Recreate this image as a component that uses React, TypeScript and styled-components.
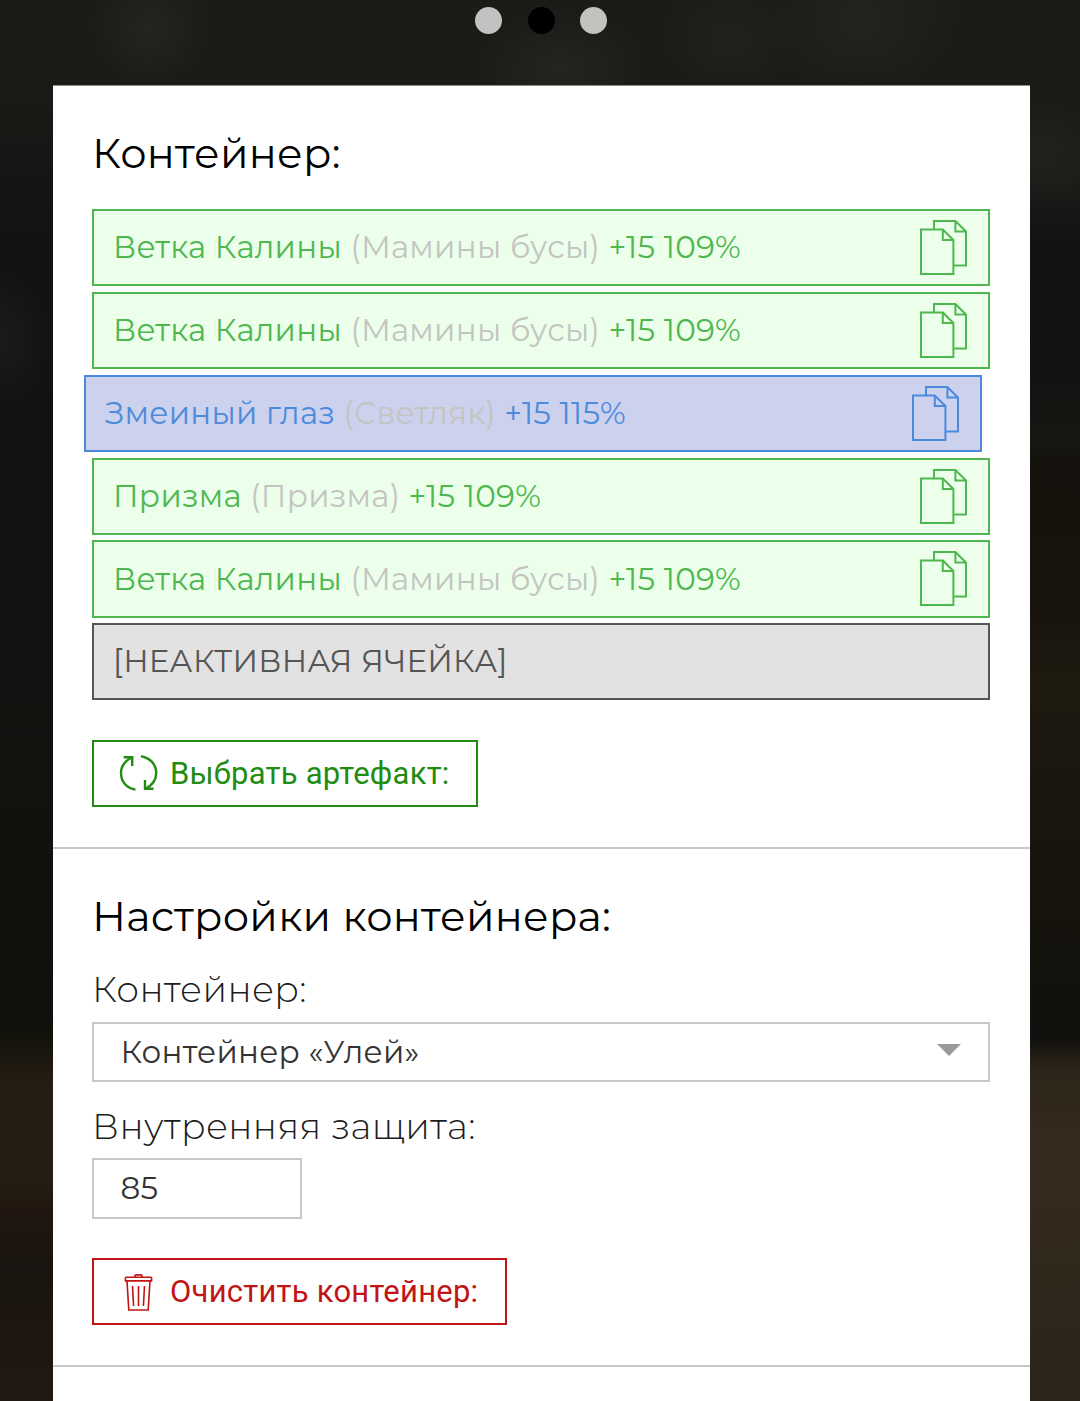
import React from "react";
import styled, { createGlobalStyle } from "styled-components";

const GlobalStyle = createGlobalStyle`
  *, *::before, *::after { box-sizing: border-box; }
  body {
    margin: 0;
    overflow: hidden;
    font-family: Montserrat, Inter, "Open Sans", sans-serif;
    font-weight: 400;
    letter-spacing: 0.27px;
    background: #11110e;
  }
`;

const Page = styled.main`
  height: 1401px;
  padding: 6.5px 50px 0 53px;
  display: flex;
  flex-direction: column;
  overflow: hidden;
  background:
    radial-gradient(ellipse 60px 60px at 150px 30px, #232520 0%, transparent 100%),
    radial-gradient(ellipse 90px 60px at 560px 70px, #242520 0%, transparent 100%),
    radial-gradient(ellipse 70px 60px at 730px 40px, #21221e 0%, transparent 100%),
    radial-gradient(ellipse 100px 80px at 860px 20px, #22241f 0%, transparent 100%),
    radial-gradient(ellipse 60px 50px at 1040px 150px, #20221d 0%, transparent 100%),
    radial-gradient(ellipse 50px 70px at 0px 340px, #1a1c1a 0%, transparent 100%),
    linear-gradient(180deg, #1b1c18 0, #1a1b17 90px, #1b1d19 180px, #121312 240px, #111210 350px, #161713 440px, #15110c 470px, #17130d 600px, #1f1a10 680px, #19160f 800px, #16130d 920px, #11110d 1000px, #12110f 1040px, #2d2519 1070px, #352b1e 1150px, #31281c 1260px, #2b241a 1401px) right top / 54px 100% no-repeat,
    linear-gradient(180deg, #1b1c18 0, #1a1b17 90px, #121312 230px, #111311 450px, #111310 700px, #0f100b 1020px, #14130c 1040px, #251d13 1085px, #251d13 1180px, #20160f 1210px, #19140f 1270px, #211814 1401px);
`;

const Dots = styled.nav`
  display: flex;
  justify-content: center;
  gap: 25.6px;
  height: 78.5px;
  padding-right: 1px;
`;

const Dot = styled.span<{ $current?: boolean }>`
  width: 27px;
  height: 27px;
  border-radius: 50%;
  background: ${(p) => (p.$current ? "#000" : "#c3c2c0")};
`;

const Card = styled.div`
  flex: 1;
  background: #fff;
  border-top: 1px solid #8f8b8a;
`;

const Section = styled.section<{ $height: number }>`
  height: ${(p) => p.$height}px;
  padding: 42px 40px 0 39px;
  border-bottom: 2px solid #c8c8c8;
`;

const Title = styled.h2`
  margin: 0;
  height: 50px;
  line-height: 50px;
  font-size: 41.5px;
  font-weight: 400;
  white-space: nowrap;
  color: #000;
`;

const Slots = styled.ul`
  list-style: none;
  margin: 31.2px 0 0;
  padding: 0;
  display: flex;
  flex-direction: column;
  gap: 5.6px;
`;

type Tone = "green" | "blue" | "gray";

const tones: Record<Tone, { line: string; fill: string }> = {
  green: { line: "#4fb750", fill: "#ebffea" },
  blue: { line: "#4c8bdb", fill: "#ccd1ee" },
  gray: { line: "#555", fill: "#e2e2e2" },
};

const Slot = styled.li<{ $tone: Tone }>`
  display: flex;
  align-items: center;
  justify-content: space-between;
  height: 77.2px;
  padding: 0 20px 0 19px;
  margin: ${(p) => (p.$tone === "blue" ? "0 8px 0 -8px" : "0")};
  border: 2px solid ${(p) => tones[p.$tone].line};
  background: ${(p) => tones[p.$tone].fill};
  color: ${(p) => tones[p.$tone].line};
  font-size: 31px;
  white-space: nowrap;
`;

const Caption = styled.span`
  padding-bottom: 0.8px;
`;

const Origin = styled.span`
  color: #c4c4c2;
`;

const CopyIcon = styled.svg`
  width: 48px;
  height: 57px;
  fill: none;
  stroke: currentColor;
  stroke-width: 2;
`;

const ActionButton = styled.button<{ $color: string; $width: number }>`
  display: flex;
  align-items: center;
  width: ${(p) => p.$width}px;
  height: 67px;
  margin: 39.5px 0 0;
  padding: 0 0 0 25px;
  border: 2px solid ${(p) => p.$color};
  background: #fff;
  color: ${(p) => p.$color};
  font-family: Roboto, sans-serif;
  font-size: 31px;
  font-weight: 400;
  letter-spacing: 0.24px;
  white-space: nowrap;
`;

const ButtonIcon = styled.svg`
  flex: none;
  width: 40px;
  height: 38px;
  margin-right: 11px;
  fill: none;
  stroke: currentColor;
  stroke-width: 2.4;
`;

const Label = styled.label`
  display: block;
  height: 44px;
  line-height: 44px;
  font-size: 36px;
  font-weight: 300;
  letter-spacing: 0.43px;
  white-space: nowrap;
  color: #1c1c1c;
`;

const Field = styled.div<{ $width?: number }>`
  display: flex;
  align-items: center;
  justify-content: space-between;
  width: ${(p) => (p.$width ? `${p.$width}px` : "100%")};
  height: 60.2px;
  margin-top: 10.6px;
  padding: 0 27px 0 26.5px;
  border: 2px solid #c8c8c8;
  font-size: 31px;
  white-space: nowrap;
  color: #333;
`;

const Caret = styled.span`
  border: 12.5px solid transparent;
  border-top: 12.5px solid #999b99;
  border-bottom: 0;
  margin-top: -4px;
`;

const FieldGroup = styled.div<{ $gap: number }>`
  margin-top: ${(p) => p.$gap}px;
`;

type Artifact = { name: string; origin: string; power: string; tone: Tone };

const branch: Artifact = {
  name: "Ветка Калины",
  origin: "(Мамины бусы)",
  power: "+15 109%",
  tone: "green",
};

const artifacts: Artifact[] = [
  branch,
  branch,
  { name: "Змеиный глаз", origin: "(Светляк)", power: "+15 115%", tone: "blue" },
  { name: "Призма", origin: "(Призма)", power: "+15 109%", tone: "green" },
  branch,
];

const Copy = () => (
  <CopyIcon viewBox="0 0 48 57">
    <path d="M1 10.5H22.8L33.4 21V55H1Z M22.8 10.5V21H33.4" />
    <path d="M14 10.5V2H35.4L46 12.5V46.5H33.4 M35.4 2V12.5H46" />
  </CopyIcon>
);

const Refresh = () => (
  <ButtonIcon viewBox="0 0 40 38">
    <path d="M12.5 3.5C5 7.5 2 13 2 19C2 28 8 34.5 16.5 35.6" />
    <path d="M4.7 3.2H13.2V12" />
    <path d="M22 2.3C31 4 37.2 10 37.2 19C37.2 26 33 31.5 26.5 34.6" />
    <path d="M26 26V34.8H34.5" />
  </ButtonIcon>
);

const Trash = () => (
  <ButtonIcon viewBox="-5 0 40 38">
    <g strokeWidth="1.6">
      <path d="M2.2 4.3H26.8Q27.6 4.3 27.6 5.1V7.9H1.4V5.1Q1.4 4.3 2.2 4.3Z" />
      <path d="M11 4.1V2.9Q11 1.9 12 1.9H17Q18 1.9 18 2.9V4.1" />
      <path d="M3 8.1L4.8 37H24.2L26 8.1" />
      <path d="M8.5 13L9.6 33M14.5 13V33M20.5 13L19.4 33" />
    </g>
  </ButtonIcon>
);

export default function App() {
  return (
    <>
      <GlobalStyle />
      <Page>
        <Dots>
          <Dot />
          <Dot $current />
          <Dot />
        </Dots>
        <Card>
          <Section $height={763}>
            <Title>Контейнер:</Title>
            <Slots>
              {artifacts.map((a, i) => (
                <Slot key={i} $tone={a.tone}>
                  <Caption>
                    {a.name} <Origin>{a.origin}</Origin> {a.power}
                  </Caption>
                  <Copy />
                </Slot>
              ))}
              <Slot $tone="gray">
                <Caption>[НЕАКТИВНАЯ ЯЧЕЙКА]</Caption>
              </Slot>
            </Slots>
            <ActionButton $color="#218c11" $width={386}>
              <Refresh />
              Выбрать артефакт:
            </ActionButton>
          </Section>
          <Section $height={518}>
            <Title>Настройки контейнера:</Title>
            <FieldGroup $gap={26}>
              <Label>Контейнер:</Label>
              <Field>
                Контейнер «Улей»
                <Caret />
              </Field>
            </FieldGroup>
            <FieldGroup $gap={22}>
              <Label>Внутренняя защита:</Label>
              <Field $width={210}>85</Field>
            </FieldGroup>
            <ActionButton $color="#c11414" $width={415}>
              <Trash />
              Очистить контейнер:
            </ActionButton>
          </Section>
        </Card>
      </Page>
    </>
  );
}
